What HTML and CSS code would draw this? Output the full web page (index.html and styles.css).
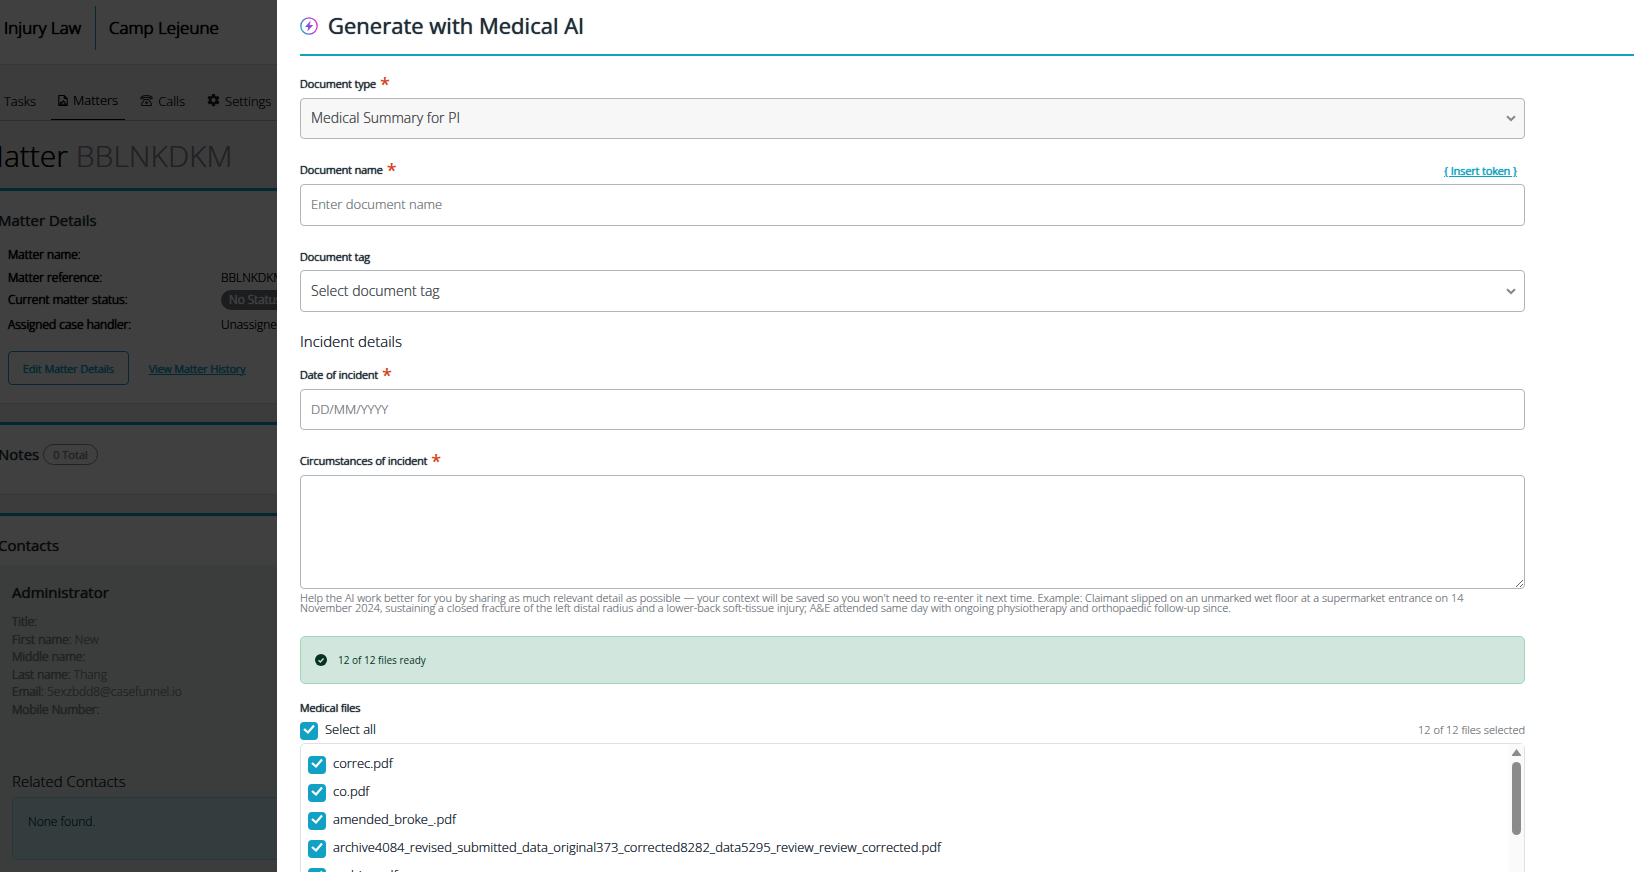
FILE: index.html
```html
<!DOCTYPE html>
<html lang="en">
<head>
<meta charset="utf-8">
<title>Generate with Medical AI</title>
<link rel="stylesheet" href="styles.css">
</head>
<body>
<div class="page" aria-hidden="true">
  <header class="topbar">
    <span class="brand strong">Injury Law</span>
    <span class="brand brand-sub strong">Camp Lejeune</span>
  </header>
  <nav class="tabs">
    <a class="tab" href="#">Tasks</a>
    <a class="tab tab-active" href="#">
      <svg class="tab-icon" viewBox="0 0 12 14"><path d="M1 1h6.500L11 4.500V13H1zM7.500 1v3.500H11M2.500 11.500h7L6.500 7.500l-2 2.500-1-1z" fill="none" stroke="currentColor" stroke-width="1.300"/></svg>Matters</a>
    <a class="tab" href="#">
      <svg class="tab-icon tab-icon-wide" viewBox="0 0 14 13"><path d="M1 4.500V3.300C3 .3 11 .3 13 3.300v1.200h-2.300V3.200H3.300v1.300zM4.800 5.500h4.400l3 4.500v2H1.800v-2z" fill="none" stroke="currentColor" stroke-width="1.100"/><circle cx="7" cy="8.800" r="1.400" fill="currentColor"/></svg>Calls</a>
    <a class="tab" href="#">
      <svg class="tab-icon tab-icon-wide" viewBox="0 0 16 16"><path fill="currentColor" fill-rule="evenodd" d="M6.300 0h3.400l.4 2.300 1.400.8 2.200-.9 1.700 3-1.800 1.500v1.600l1.800 1.500-1.700 3-2.200-.9-1.400.8-.4 2.300H6.300l-.4-2.300-1.400-.8-2.200.9-1.700-3 1.800-1.500V6.700L.6 5.200l1.700-3 2.200.9 1.400-.8zM8 5a2.500 2.500 0 1 0 0 5 2.500 2.500 0 0 0 0-5z"/></svg>Settings</a>
  </nav>
  <h1 class="page-title">Matter <span class="page-ref">BBLNKDKM</span></h1>
  <section class="card">
    <h2 class="card-title">Matter Details</h2>
    <dl class="facts">
      <dt class="strong">Matter name:</dt><dd></dd>
      <dt class="strong">Matter reference:</dt><dd>BBLNKDKM</dd>
      <dt class="strong">Current matter status:</dt><dd><span class="status strong">No Status</span></dd>
      <dt class="strong">Assigned case handler:</dt><dd>Unassigned</dd>
    </dl>
    <div class="actions">
      <button class="btn-outline strong" type="button">Edit Matter Details</button>
      <a class="link strong" href="#">View Matter History</a>
    </div>
  </section>
  <section class="card card-notes">
    <h2 class="card-title">Notes <span class="count">0 Total</span></h2>
  </section>
  <section class="card card-contacts">
    <h2 class="card-title">Contacts</h2>
    <div class="contact">
      <h3 class="contact-title">Administrator</h3>
      <ul class="contact-list">
        <li><b class="strong">Title:</b></li>
        <li><b class="strong">First name:</b> New</li>
        <li><b class="strong">Middle name:</b></li>
        <li><b class="strong">Last name:</b> Thang</li>
        <li><b class="strong">Email:</b> 5exzbdd8@casefunnel.io</li>
        <li><b class="strong">Mobile Number:</b></li>
      </ul>
      <h3 class="related-title">Related Contacts</h3>
      <p class="info">None found.</p>
    </div>
  </section>
</div>
<div class="backdrop"></div>

<main class="drawer">
  <header class="drawer-head">
    <svg class="ai-icon" viewBox="0 0 18 18"><defs><linearGradient id="ai" x1="0" y1="0.700" x2="1" y2="0.300"><stop offset="0" stop-color="#14a3c4"/><stop offset="0.500" stop-color="#8a4be0"/><stop offset="1" stop-color="#e62bd8"/></linearGradient></defs><circle cx="9" cy="9" r="8.200" fill="none" stroke="url(#ai)" stroke-width="1.300"/><path d="M10.800 3.600 5 10h3.300l-1 4.600L13.200 8H9.600z" fill="#8a4fdc"/></svg>
    <h1 class="drawer-title">Generate with Medical AI</h1>
  </header>
  <form class="form">
    <div class="field">
      <label class="label strong" for="type">Document type <span class="req">*</span></label>
      <div class="select-wrap">
        <select class="control" id="type" disabled><option>Medical Summary for PI</option></select>
        <svg class="chevron" viewBox="0 0 10 7"><path d="M1 1.200 5 5l4-3.800" fill="none" stroke="#85898f" stroke-width="2"/></svg>
      </div>
    </div>
    <div class="field">
      <div class="label-row">
        <label class="label strong" for="name">Document name <span class="req">*</span></label>
        <a class="link token strong" href="#">{ Insert token }</a>
      </div>
      <input class="control tall" id="name" type="text" placeholder="Enter document name">
    </div>
    <div class="field field-tag">
      <label class="label label-plain strong" for="tag">Document tag</label>
      <div class="select-wrap">
        <select class="control tall" id="tag"><option>Select document tag</option></select>
        <svg class="chevron" viewBox="0 0 10 7"><path d="M1 1.200 5 5l4-3.800" fill="none" stroke="#85898f" stroke-width="2"/></svg>
      </div>
    </div>
    <h2 class="section-title">Incident details</h2>
    <div class="field">
      <label class="label strong" for="date">Date of incident <span class="req">*</span></label>
      <input class="control" id="date" type="text" placeholder="DD/MM/YYYY">
    </div>
    <div class="field field-area">
      <label class="label strong" for="circ">Circumstances of incident <span class="req">*</span></label>
      <textarea class="control area" id="circ"></textarea>
      <p class="help">Help the AI work better for you by sharing as much relevant detail as possible — your context will be saved so you won't need to re-enter it next time. Example: Claimant slipped on an unmarked wet floor at a supermarket entrance on 14 November 2024, sustaining a closed fracture of the left distal radius and a lower-back soft-tissue injury; A&amp;E attended same day with ongoing physiotherapy and orthopaedic follow-up since.</p>
    </div>
    <div class="ready" role="status">
      <svg class="ready-icon" viewBox="0 0 12 12"><circle cx="6" cy="6" r="6" fill="#06331f"/><path d="M3.500 6.200 5.300 8l3.300-3.500" fill="none" stroke="#d1e7dd" stroke-width="1.300"/></svg>
      12 of 12 files ready
    </div>
    <div class="files-title strong">Medical files</div>
    <div class="files-head">
      <label class="check"><input class="box" type="checkbox" checked><span class="check-text">Select all</span></label>
      <span class="selected">12 of 12 files selected</span>
    </div>
    <div class="files">
      <div class="file-list">
        <label class="check"><input class="box" type="checkbox" checked><span class="check-text">correc.pdf</span></label>
        <label class="check"><input class="box" type="checkbox" checked><span class="check-text">co.pdf</span></label>
        <label class="check"><input class="box" type="checkbox" checked><span class="check-text">amended_broke_.pdf</span></label>
        <label class="check"><input class="box" type="checkbox" checked><span class="check-text">archive4084_revised_submitted_data_original373_corrected8282_data5295_review_review_corrected.pdf</span></label>
        <label class="check"><input class="box" type="checkbox" checked><span class="check-text">archive.pdf</span></label>
      </div>
      <div class="rail">
        <svg class="rail-up" viewBox="0 0 9 7"><path d="M4.500 0 9 6v1H0V6z" fill="#8b8b8b"/></svg>
        <div class="thumb"></div>
      </div>
    </div>
  </form>
</main>
</body>
</html>
```
FILE: styles.css
```css
* { box-sizing: border-box; }
body, h1, h2, h3, p, dl, dd, ul { margin: 0; padding: 0; }
body {
  height: 100vh;
  overflow: hidden;
  font-family: "Open Sans", "Noto Sans", sans-serif;
  font-size: 13px;
  font-weight: 300;
  text-shadow: 0 0 0 currentColor;
  color: #212b36;
  background: #f0eff3;
}
ul { list-style: none; }
a { color: inherit; text-decoration: none; }
button, input, select, textarea { font: inherit; text-shadow: inherit; }
.strong { font-weight: 300; text-shadow: 0 0 1px currentColor, 0 0 1px currentColor, 0 0 0 currentColor; }

/* Matter page behind the drawer */
.page { color: #000; }
.topbar {
  display: flex;
  align-items: center;
  height: 65px;
  padding: 0 4px;
  background: #fff;
  border-bottom: 1px solid #dcdce0;
}
.brand { display: flex; align-items: center; height: 44px; margin-bottom: 8px; padding-bottom: 2px; font-size: 17px; }
.brand-sub { margin-left: 14px; padding-left: 13px; border-left: 1px solid #12a1c0; }
.tabs {
  display: flex;
  align-items: stretch;
  gap: 8px;
  height: 56px;
  padding-top: 16px;
  border-bottom: 1px solid #b8b8bc;
}
.tab { display: flex; align-items: center; gap: 5px; padding: 0 7px; color: #1d2226; }
.tab:first-child { padding-left: 4px; }
.tab-active { color: #000; border-bottom: 1px solid #000; }
.tab-icon { width: 10px; height: 13px; }
.tab-icon-wide { width: 13px; }
.page-title { height: 67px; margin-left: -22px; font-size: 30px; font-weight: 300; line-height: 70px; white-space: nowrap; }
.page-ref { color: #85898c; }
.card {
  height: 216px;
  margin-bottom: 18px;
  background: #fff;
  border-top: 3px solid #12a1c0;
  border-bottom: 1px solid #dcdce0;
}
.card-title, .contact-title, .drawer-title { font-weight: 400; text-shadow: 0 0 1px currentColor; }
.card-title { margin-left: -2px; padding-top: 17px; font-size: 15px; line-height: 24px; color: #212b36; }
.facts {
  display: grid;
  grid-template-columns: 213px 200px;
  grid-template-rows: 23px 22px 23px 27px;
  align-items: center;
  margin-top: 11px;
  padding-left: 8px;
  font-size: 12px;
}
.status { padding: 1px 8px 2px; border-radius: 10px; background: #6c757d; color: #fff; }
.actions { display: flex; align-items: center; gap: 20px; margin-top: 13px; padding-left: 8px; font-size: 11px; }
.btn-outline {
  height: 34px;
  padding: 0 14px;
  border: 1px solid #12a1c0;
  border-radius: 4px;
  background: none;
  color: #12a1c0;
}
.link { color: #12a1c0; text-decoration: underline; }
.card-notes { height: 73px; }
.count { padding: 2px 9px; border: 1px solid #85898c; border-radius: 11px; color: #85898c; font-size: 11px; vertical-align: 1px; }
.card-contacts { height: 400px; margin: 0; }
.contact { margin-top: 8px; padding: 15px 12px; height: 308px; background: #ecefed; }
.contact-title { font-size: 15px; line-height: 24px; color: #212b36; }
.contact-list { margin-top: 9px; font-size: 12px; line-height: 17px; color: #85898c; }
.contact-list li { height: 17px; }
.contact-list li:nth-child(odd) { height: 18px; }
.related-title { margin-top: 51px; font-size: 15px; font-weight: 300; line-height: 24px; color: #212b36; }
.info {
  height: 63px;
  width: 400px;
  margin-top: 4px;
  padding: 15px;
  border: 1px solid #9adcec;
  border-radius: 5px;
  background: #cff0f8;
  color: #055160;
  font-size: 12px;
}
.backdrop { position: fixed; inset: 0; background: rgba(0, 0, 0, 0.75); }

/* Drawer */
.drawer {
  position: fixed;
  inset: 0 0 0 277px;
  overflow: hidden;
  padding-left: 23px;
  background: #fff;
}
.drawer-head { display: flex; align-items: center; gap: 10px; height: 56px; padding-bottom: 3px; border-bottom: 2px solid #12a1c0; }
.ai-icon { width: 18px; height: 18px; }
.drawer-title { padding-bottom: 2px; font-size: 22px; line-height: 32px; }
.form { margin-right: 109px; padding-top: 16px; }
.field { margin-bottom: 19px; }
.label { display: block; height: 26px; font-size: 11px; line-height: 24px; }
.req { margin-left: 1px; color: #d4451a; font-size: 18px; line-height: 1; text-shadow: none; font-weight: 600; vertical-align: -3px; }
.label-row { display: flex; justify-content: space-between; }
.token { margin-right: 8px; font-size: 11px; line-height: 26px; }
.control {
  display: block;
  width: 100%;
  height: 41px;
  padding: 0 10px 2px;
  border: 1px solid #adb5bd;
  border-radius: 4px;
  background: #fff;
  color: #4a4e52;
  outline: none;
}
.tall { height: 42px; }
select.control { appearance: none; opacity: 1; font-size: 14px; }
select.control:disabled { background: #f7f7f7; }
.control::placeholder { color: #7c8085; opacity: 1; }
.select-wrap { display: grid; align-items: center; }
.select-wrap > * { grid-area: 1 / 1; }
.chevron { justify-self: end; width: 10px; height: 7px; margin-right: 9px; pointer-events: none; }
.label-plain { height: 25px; }
.field-tag { margin-bottom: 15px; }
.section-title { margin-bottom: 8px; font-size: 15px; font-weight: 300; line-height: 28px; }
.area { height: 114px; resize: vertical; }
.field-area { margin-bottom: 23px; }
.help { padding: 4px 24px 0 0; font-size: 11px; line-height: 10px; color: #7c8085; }
.ready {
  display: flex;
  align-items: center;
  gap: 10px;
  height: 48px;
  padding-left: 14px;
  border: 1px solid #a3d4bb;
  border-radius: 5px;
  background: #d1e7dd;
  color: #06331f;
  font-size: 10px;
  font-weight: 400;
  text-shadow: none;
}
.ready-icon { width: 12px; height: 12px; margin-right: 1px; }
.files-title { margin-top: 14px; font-size: 11px; line-height: 20px; }
.files-head { display: flex; align-items: center; justify-content: space-between; height: 25px; }
.selected { padding-bottom: 3px; color: #7c8085; font-size: 11px; }
.check { display: flex; align-items: center; gap: 7px; height: 28px; }
.check-text { padding-bottom: 4px; }
.box {
  appearance: none;
  flex: none;
  width: 18px;
  height: 18px;
  margin: 0;
  border-radius: 4px;
  background: #12a1c4 url("data:image/svg+xml,%3Csvg xmlns='http://www.w3.org/2000/svg' viewBox='0 0 18 18'%3E%3Cpath d='M4 7l4 3.500 6-7' fill='none' stroke='white' stroke-width='2.200'/%3E%3C/svg%3E") center / 18px;
}
.files { display: flex; height: 320px; border: 1px solid #dee2e6; border-radius: 5px; }
.file-list { flex: 1; padding: 7px; }
.rail { display: flex; flex-direction: column; align-items: center; gap: 6px; width: 15px; padding-top: 5px; background: #fafafa; }
.rail-up { width: 9px; height: 7px; }
.thumb { width: 9px; height: 73px; border-radius: 5px; background: #8b8b8b; }
```
